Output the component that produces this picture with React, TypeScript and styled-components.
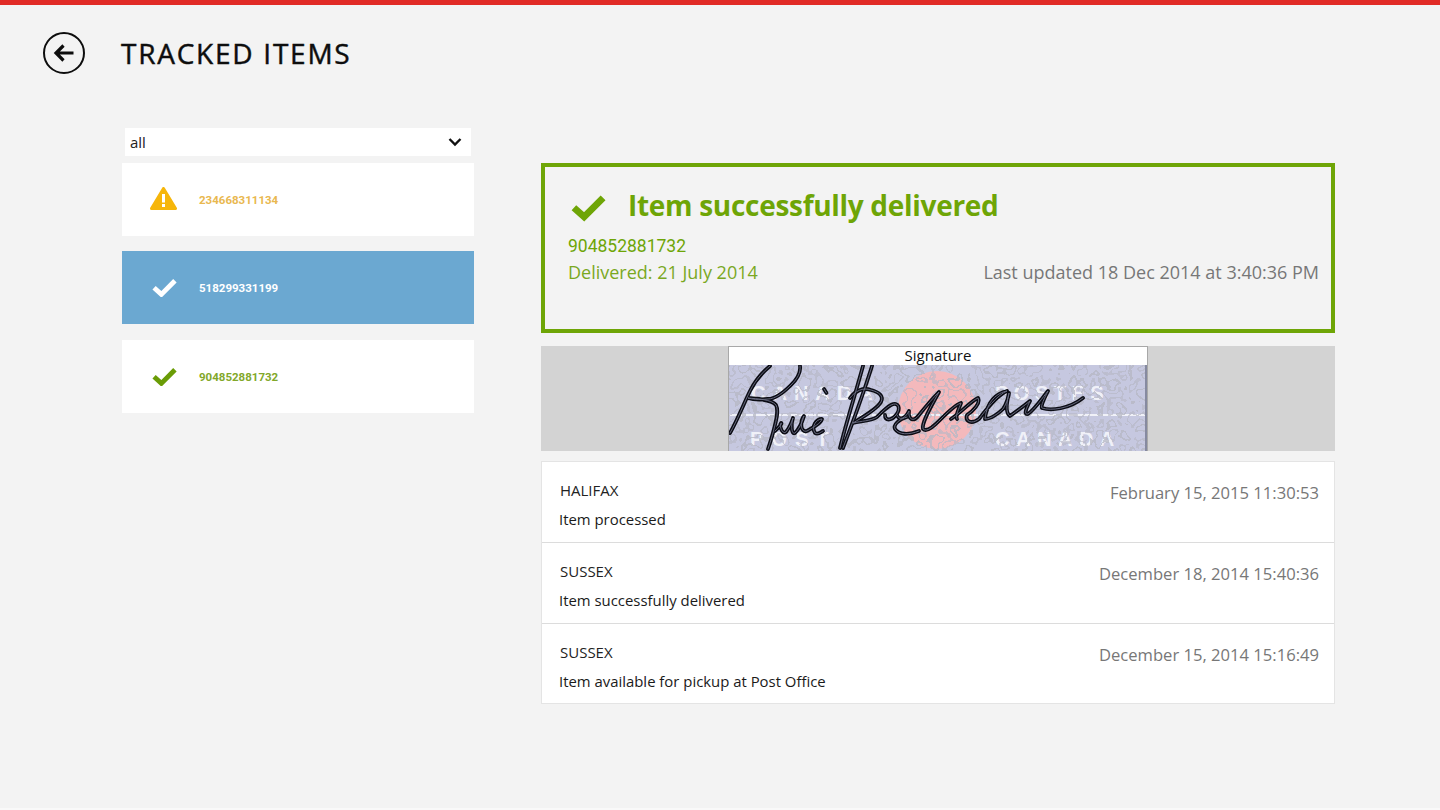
import React from "react";
import styled, { createGlobalStyle } from "styled-components";

const Global = createGlobalStyle`
  html, body { margin: 0; padding: 0; background: #f3f3f3; }
  body { font-family: "Open Sans", "Noto Sans", sans-serif; }
`;
const Page = styled.div`
  width: 1440px; height: 810px; overflow: hidden; background: #f3f3f3;
  border-top: 5px solid #e12b26; border-bottom: 2px solid #f9f9f9; box-sizing: border-box;
`;
const Header = styled.header`
  display: flex; align-items: center; height: 96px; padding: 0 0 0 42px; box-sizing: border-box;
`;
const BackButton = styled.button`
  width: 44px; height: 44px; padding: 0; border: 0; background: none; margin-right: 35px; display: block;
`;
const Title = styled.h1`
  margin: 0; font-size: 28px; line-height: 38px; font-weight: 400; letter-spacing: 1.75px; color: #0d0d0d;
  -webkit-text-stroke: 0.45px #0d0d0d;
`;
const Columns = styled.div`
  display: flex; align-items: flex-start; padding: 27px 0 0 122px;
`;
const Left = styled.aside`
  width: 352px; margin-right: 67px; display: flex; flex-direction: column; align-items: stretch;
`;
const Filter = styled.div`
  margin: 0 3px 7px; height: 28px; background: #fff; display: flex; align-items: center;
  justify-content: space-between; padding: 0 9px 0 5px; font-size: 15px; color: #222;
`;
const Items = styled.div`
  display: flex; flex-direction: column; gap: 15px;
`;
const Item = styled.div<{ $bg: string; $fg: string }>`
  height: 73px; background: ${p => p.$bg}; color: ${p => p.$fg}; display: flex; align-items: center;
  &:nth-child(3) { margin-top: 1px; }
`;
const ItemIcon = styled.div<{ $pad: number }>`
  width: 77px; padding-left: ${p => p.$pad}px; box-sizing: border-box; display: flex; align-items: center;
`;
const ItemNumber = styled.span`
  font-family: Roboto, sans-serif; font-weight: 700; font-size: 11.5px;
`;
const Right = styled.main`
  width: 794px; padding-top: 35px; display: flex; flex-direction: column;
`;
const Status = styled.section`
  height: 170px; border: 4px solid #6ea506; box-sizing: border-box; padding: 0 12px 0 23px; color: #6ea506;
  display: flex; flex-direction: column;
`;
const StatusHead = styled.div`
  display: flex; align-items: center; height: 64px; padding-top: 11px; box-sizing: border-box;
`;
const StatusIcon = styled.div`
  width: 60px; padding: 7px 0 0 3px; box-sizing: border-box; display: flex;
`;
const StatusTitle = styled.h2`
  margin: 0; font-size: 28px; font-weight: 700; line-height: 38px; letter-spacing: -0.3px;
`;
const StatusNumber = styled.div`
  font-family: Roboto, sans-serif; font-size: 17.5px; line-height: 26px; margin-top: 2px;
`;
const StatusRow = styled.div`
  display: flex; justify-content: space-between; font-size: 18px; line-height: 26px;
`;
const Delivered = styled.span`
  color: #7aa81f;
`;
const Updated = styled.span`
  color: #777;
`;
const SignatureBand = styled.section`
  margin-top: 13px; height: 105px; background: #d3d3d3; display: flex; justify-content: center;
`;
const SignatureCard = styled.figure`
  margin: 0; width: 420px; display: flex; flex-direction: column; box-sizing: border-box;
  border: 1px solid #a8a8a8; border-bottom: 0; background: #fff;
`;
const SignatureCaption = styled.figcaption`
  height: 18px; line-height: 17px; text-align: center; font-size: 15px; color: #111;
`;
const SignatureArt = styled.svg`
  display: block; width: 418px; height: 86px;
`;
const Events = styled.section`
  margin-top: 10px; background: #fff; border: 1px solid #e4e4e4; box-sizing: border-box;
`;
const Event = styled.div`
  height: 81px; box-sizing: border-box; padding: 15px 15px 0 18px; border-top: 1px solid #dcdcdc;
  &:first-child { border-top: 0; height: 80px; }
  &:last-child { height: 80px; }
`;
const EventTop = styled.div`
  display: flex; justify-content: space-between; align-items: center; height: 26px; font-size: 15px; color: #222;
`;
const EventDate = styled.span`
  font-size: 16.6px; color: #777; position: relative; top: 2px;
`;
const EventText = styled.div`
  font-size: 14.9px; line-height: 22px; color: #1a1a1a; margin: 5px 0 0 -1px;
`;

const Check = ({ size, color }: { size: number; color: string }) => (
  <svg width={size} height={size * 0.78} viewBox="0 0 36 28">
    <path d="M3 14 L13.5 23.5 L33 4" fill="none" stroke={color} strokeWidth="7" strokeLinejoin="miter" />
  </svg>
);

const Warning = () => (
  <svg width="27" height="25" viewBox="0 0 27 25">
    <path d="M13.5 1.5 L25.5 21.5 H1.5 Z" fill="#f6b60a" stroke="#f6b60a" strokeWidth="3" strokeLinejoin="round" />
    <rect x="12" y="7" width="3" height="8.5" fill="#fff" />
    <rect x="12" y="17" width="3" height="3" fill="#fff" />
  </svg>
);

const BackIcon = () => (
  <svg width="44" height="44" viewBox="0 0 44 44">
    <circle cx="22" cy="22" r="20" fill="none" stroke="#0d0d0d" strokeWidth="2" />
    <path d="M31.5 22 H14 M21.5 14.5 L14 22 L21.5 29.5" fill="none" stroke="#0d0d0d" strokeWidth="3.2" />
  </svg>
);

const Chevron = () => (
  <svg width="14" height="10" viewBox="0 0 14 10">
    <path d="M1.5 2 L7 7.5 L12.5 2" fill="none" stroke="#111" strokeWidth="2.4" />
  </svg>
);

const signatureStrokes = [
  "M1 68 C8 56 16 36 21 26 C27 14 35 6 41 1",
  "M71 1 C72 8 68 14 62 20 C54 28 46 34 39 34 C30 35 22 34 19 33 C28 34 42 34 47 40 C50 46 47 56 45 64 C43 72 41 78 39 84",
  "M46 66 C50 62 54 58 52 58 C50 60 53 70 57 67 C61 62 63 56 64 53 C62 58 62 70 66 68 C72 62 74 54 75 51 C71 56 71 68 78 66 C85 62 92 58 93 54 C87 54 82 62 86 68 C89 70 92 67 94 66",
  "M134 1 C126 30 116 62 111 83",
  "M143 1 C134 30 122 62 114 83",
  "M121 33 C126 26 134 22 142 25 C150 27 155 31 152 37 C148 44 134 52 124 58 C132 56 142 56 148 52 C152 48 158 42 162 40 C170 36 172 44 167 50 C162 56 156 56 156 50",
  "M168 50 C170 56 176 54 180 46 C179 54 184 58 190 50 C198 40 205 32 210 27 C204 38 192 58 194 64 C198 68 206 60 212 54 C218 48 226 40 232 38 C230 44 226 50 228 54",
  "M190 66 C180 70 170 70 166 64 C164 60 170 54 178 52",
  "M222 54 C234 46 242 36 249 33 C252 38 244 46 238 50 C236 56 242 60 250 54 C256 46 268 30 278 26 C268 28 258 36 256 54 C262 54 270 48 274 44 C278 38 280 30 280 28 C278 36 276 48 281 51 C288 46 296 40 301 36 C298 42 294 50 299 49 C306 44 314 32 319 26 C316 32 311 42 313 43 C322 46 340 44 354 33",
];

const SignatureImage = () => (
  <SignatureArt viewBox="0 0 418 86" preserveAspectRatio="none">
    <defs>
      <filter id="grain" x="0" y="0" width="100%" height="100%">
        <feTurbulence type="fractalNoise" baseFrequency="0.085" numOctaves="2" seed="11" />
        <feColorMatrix type="matrix" values="0 0 0 0 0  0 0 0 0 0  0 0 0 0 0  1 0 0 0 0" />
        <feComponentTransfer>
          <feFuncA type="discrete" tableValues="0 0 0 0 0 0 0 0 0.75 0.8 0 0 0 0 0.6 0.7 0 0 0 0 0 0 0 0" />
        </feComponentTransfer>
        <feColorMatrix type="matrix" values="0 0 0 0 0.47  0 0 0 0 0.48  0 0 0 0 0.56  0 0 0 1 0" />
        <feGaussianBlur stdDeviation="0.35" />
      </filter>
    </defs>
    <rect width="418" height="86" fill="#c6c8e0" />
    <circle cx="208" cy="45" r="39" fill="#f4b9bc" />
    <g fill="#f0f1f8" fontFamily="Liberation Sans, sans-serif" fontSize="20" fontWeight="700">
      <text x="22" y="35" letterSpacing="7">CANADA</text>
      <text x="266" y="35" letterSpacing="5.5">POSTES</text>
      <text x="21" y="81" letterSpacing="8">POST</text>
      <text x="266" y="81" letterSpacing="6.5">CANADA</text>
    </g>
    <rect x="0" y="49" width="418" height="2" fill="#f0f1f8" />
    <rect width="418" height="86" filter="url(#grain)" />
    <rect x="416" width="2" height="86" fill="#868aa0" />
    <g fill="none" strokeLinecap="round" strokeLinejoin="round">
      {[{ c: "#0b0c14", w: 3.8 }, { c: "#6f7288", w: 0.9 }].map(s => (
        <g key={s.c} stroke={s.c} strokeWidth={s.w}>
          {signatureStrokes.map(d => <path key={d} d={d} />)}
          <path d="M95 24 L97.5 28" />
        </g>
      ))}
    </g>
  </SignatureArt>
);

const events = [
  { place: "HALIFAX", date: "February 15, 2015 11:30:53", text: "Item processed" },
  { place: "SUSSEX", date: "December 18, 2014 15:40:36", text: "Item successfully delivered" },
  { place: "SUSSEX", date: "December 15, 2014 15:16:49", text: "Item available for pickup at Post Office" },
];

export default function App() {
  return (
    <Page>
      <Global />
      <Header>
        <BackButton aria-label="Back"><BackIcon /></BackButton>
        <Title>TRACKED ITEMS</Title>
      </Header>
      <Columns>
        <Left>
          <Filter>all<Chevron /></Filter>
          <Items>
            <Item $bg="#fff" $fg="#e9b84f">
              <ItemIcon $pad={28}><Warning /></ItemIcon>
              <ItemNumber>234668311134</ItemNumber>
            </Item>
            <Item $bg="#6ba8d1" $fg="#fff">
              <ItemIcon $pad={30}><Check size={25} color="#fff" /></ItemIcon>
              <ItemNumber>518299331199</ItemNumber>
            </Item>
            <Item $bg="#fff" $fg="#82a82a">
              <ItemIcon $pad={30}><Check size={25} color="#6a9c06" /></ItemIcon>
              <ItemNumber>904852881732</ItemNumber>
            </Item>
          </Items>
        </Left>
        <Right>
          <Status>
            <StatusHead>
              <StatusIcon><Check size={35} color="#6ea506" /></StatusIcon>
              <StatusTitle>Item successfully delivered</StatusTitle>
            </StatusHead>
            <StatusNumber>904852881732</StatusNumber>
            <StatusRow>
              <Delivered>Delivered: 21 July 2014</Delivered>
              <Updated>Last updated 18 Dec 2014 at 3:40:36 PM</Updated>
            </StatusRow>
          </Status>
          <SignatureBand>
            <SignatureCard>
              <SignatureCaption>Signature</SignatureCaption>
              <SignatureImage />
            </SignatureCard>
          </SignatureBand>
          <Events>
            {events.map(e => (
              <Event key={e.date}>
                <EventTop><span>{e.place}</span><EventDate>{e.date}</EventDate></EventTop>
                <EventText>{e.text}</EventText>
              </Event>
            ))}
          </Events>
        </Right>
      </Columns>
    </Page>
  );
}
